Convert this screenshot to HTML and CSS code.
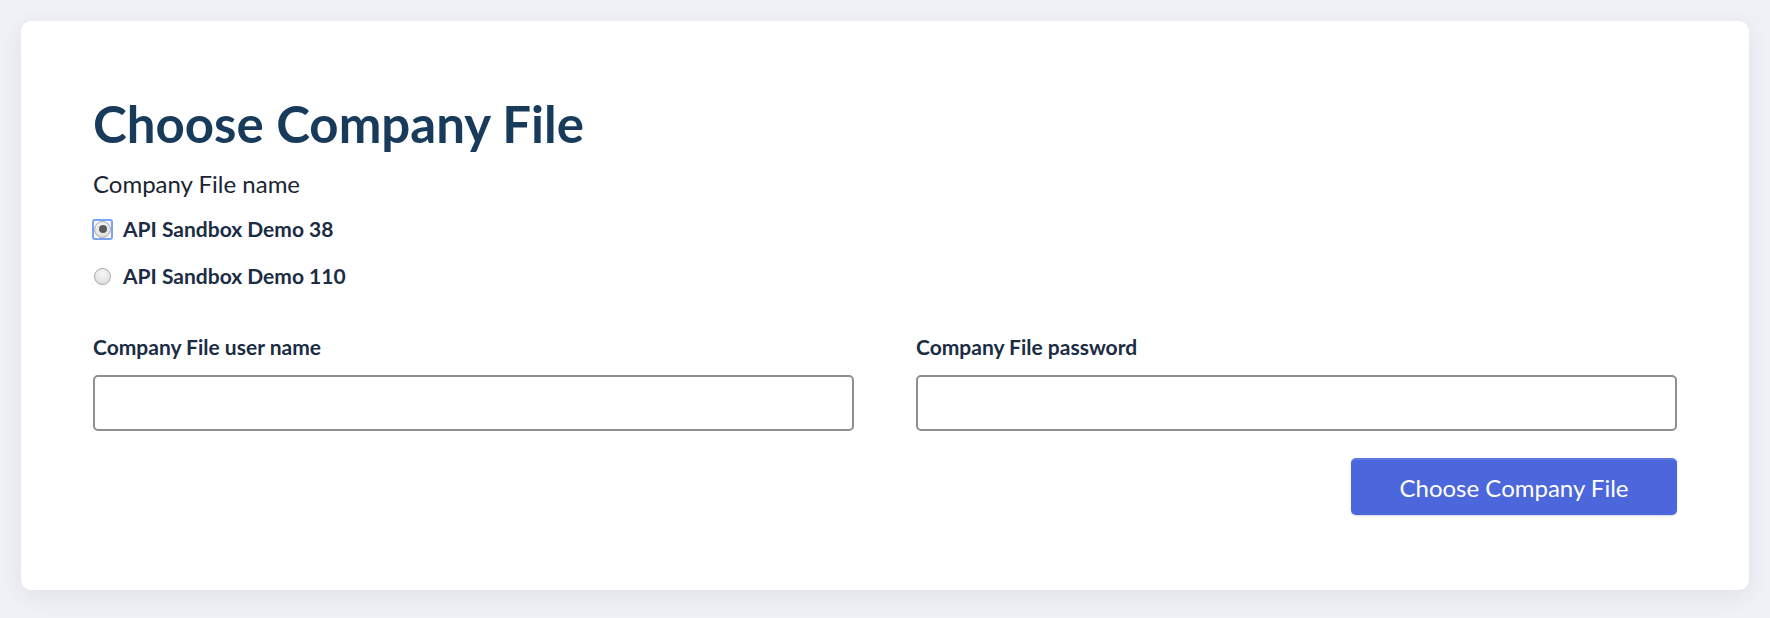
FILE: index.html
```html
<!DOCTYPE html>
<html lang="en">
<head>
<meta charset="utf-8">
<title>Choose Company File</title>
<link rel="stylesheet" href="styles.css">
</head>
<body>
<main class="card">
  <h1 class="title">Choose Company File</h1>
  <div class="file-name">Company File name</div>
  <div class="radios">
    <label class="radio-row"><span class="radio-box focused"><input type="radio" name="cf" class="radio" checked></span><span>API Sandbox Demo 38</span></label>
    <label class="radio-row"><span class="radio-box"><input type="radio" name="cf" class="radio"></span><span>API Sandbox Demo 110</span></label>
  </div>
  <div class="fields">
    <div class="field">
      <label class="field-label">Company File user name</label>
      <input type="text" class="text-input">
    </div>
    <div class="field">
      <label class="field-label">Company File password</label>
      <input type="password" class="text-input">
    </div>
  </div>
  <div class="actions">
    <button class="btn">Choose Company File</button>
  </div>
</main>
</body>
</html>
```
FILE: styles.css
```css
html, body {
  margin: 0;
  padding: 0;
}
body {
  background: #f0f1f6;
  font-family: Lato, "Open Sans", Arial, sans-serif;
  color: #1a2b3f;
  padding: 21px 21px 28px 21px;
}
.card {
  background: #ffffff;
  border-radius: 10px;
  box-shadow: 0 6px 24px rgba(40, 50, 90, 0.08);
  padding: 72px 72px 75px 72px;
}
.title {
  margin: 0;
  font-size: 51px;
  line-height: 61px;
  font-weight: 700;
  color: #183b5b;
}
.file-name {
  margin-top: 16px;
  font-size: 24px;
  line-height: 28px;
  color: #1a2533;
}
.radios {
  margin-top: 18px;
  display: flex;
  flex-direction: column;
  gap: 21px;
}
.radio-row {
  display: flex;
  align-items: center;
  gap: 11px;
  font-size: 21px;
  line-height: 26px;
  font-weight: 700;
  color: #1b2c44;
}
.radio-box {
  display: flex;
  flex: none;
  padding: 1px;
  border-radius: 2px;
}
.radio-box.focused {
  outline: 2px solid #7aa3f5;
  outline-offset: -1px;
}
.radio {
  appearance: none;
  -webkit-appearance: none;
  box-sizing: border-box;
  margin: 0;
  width: 17px;
  height: 17px;
  border-radius: 50%;
  border: 1px solid #a6a6a6;
  background: radial-gradient(circle at 50% 30%, #f6f6f6 0%, #dadada 100%);
  position: relative;
}
.radio:checked::after {
  content: "";
  position: absolute;
  left: 3.5px;
  top: 3.5px;
  width: 8px;
  height: 8px;
  border-radius: 50%;
  background: #5a5a5a;
}
.fields {
  margin-top: 45px;
  display: grid;
  grid-template-columns: 1fr 1fr;
  column-gap: 62px;
}
.field {
  display: flex;
  flex-direction: column;
}
.field-label {
  font-size: 21px;
  line-height: 26px;
  font-weight: 700;
  color: #1b2c44;
  margin-bottom: 15px;
}
.text-input {
  box-sizing: border-box;
  height: 56px;
  border: 2px solid #8e8e93;
  border-radius: 5px;
  background: #fff;
  font-family: inherit;
  font-size: 18px;
  padding: 0 12px;
}
.actions {
  margin-top: 27px;
  display: flex;
  justify-content: flex-end;
}
.btn {
  width: 326px;
  height: 57px;
  border: none;
  border-top: 2px solid #5e78e4;
  border-radius: 5px;
  background: #4c67dc;
  color: #ffffff;
  font-family: inherit;
  font-size: 24px;
  box-shadow: 0 1px 2px rgba(30, 40, 90, 0.2);
}
```
